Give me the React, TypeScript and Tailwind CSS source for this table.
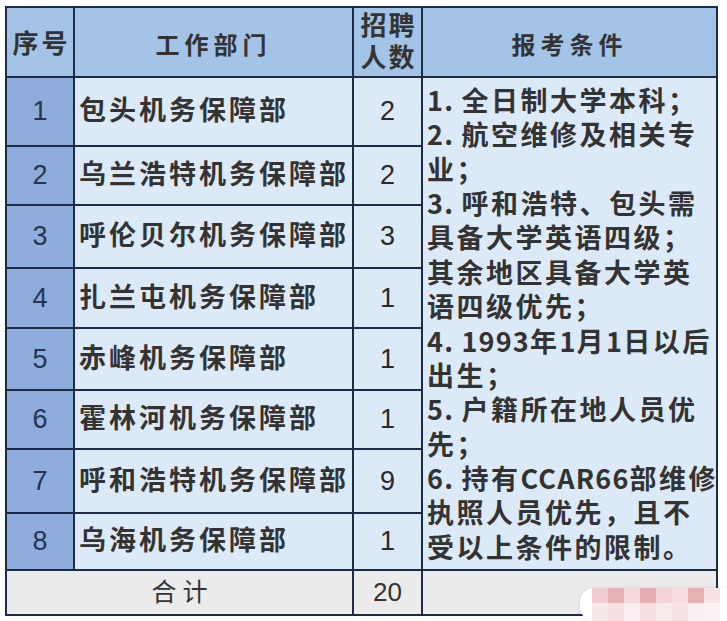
import React from 'react'

const ROWS: [string, string, string][] = [
  ['1', '包头机务保障部', '2'],
  ['2', '乌兰浩特机务保障部', '2'],
  ['3', '呼伦贝尔机务保障部', '3'],
  ['4', '扎兰屯机务保障部', '1'],
  ['5', '赤峰机务保障部', '1'],
  ['6', '霍林河机务保障部', '1'],
  ['7', '呼和浩特机务保障部', '9'],
  ['8', '乌海机务保障部', '1'],
]

// conditions column, wrapped as in the source sheet
const CONDITIONS = [
  '1. 全日制大学本科；',
  '2. 航空维修及相关专',
  '业；',
  '3. 呼和浩特、包头需',
  '具备大学英语四级；',
  '其余地区具备大学英',
  '语四级优先；',
  '4. 1993年1月1日以后',
  '出生；',
  '5. 户籍所在地人员优',
  '先；',
  '6. 持有CCAR66部维修',
  '执照人员优先，且不',
  '受以上条件的限制。',
]

const WM_TOP = ['#f1cdd0', '#e8b1b5', '#f4d9db', '#e7adb2', '#f3d4d7', '#f5dcde', '#e8afb4', '#f6e2e4']
const WM_BOTTOM = ['#f8e8e9', '#f6e0e2', '#faeef0', '#f5dde0', '#f9ebec', '#f7e3e5', '#faeff0', '#fbf2f3']

// latin runs sit tighter than the CJK characters
function ConditionLine({ text }: { text: string }) {
  const parts = text.split(/([\x20-\x7e]+)/).filter(Boolean)
  return (
    <div className="h-[34.4px]">
      {parts.map((p, i) =>
        /^[\x20-\x7e]+$/.test(p) ? (
          <span key={i} className="tracking-[1.2px]">
            {p}
          </span>
        ) : (
          <span key={i}>{p}</span>
        )
      )}
    </div>
  )
}

export default function App() {
  return (
    <div className="relative w-[727px] h-[621px] bg-white overflow-hidden font-['Liberation_Sans','Noto_Sans_CJK_SC',sans-serif] text-[#333]">
      <div className="ml-[5px] mt-[6px] w-[713px] grid grid-cols-[66px_277px_67px_293px] grid-rows-[68px_67px_57px_61px_58px_60px_57px_62px_55px_43px] gap-[2px] p-[2px] bg-[#1e2b45]">
        {/* header */}
        <div className="bg-[#a3c3e7] flex items-center justify-center text-[26px] font-bold tracking-[3px] pl-[3px] pt-1">
          序号
        </div>
        <div className="bg-[#a3c3e7] flex items-center justify-center text-[24px] font-bold tracking-[5px] pt-2">
          工作部门
        </div>
        <div className="bg-[#a3c3e7] flex flex-col items-center justify-center text-[26px] font-bold leading-[32px] tracking-[2px] pl-[2px]">
          <span>招聘</span>
          <span>人数</span>
        </div>
        <div className="bg-[#a3c3e7] flex items-center justify-center text-[24px] font-bold tracking-[5px] pt-2">
          报考条件
        </div>

        {/* conditions spanning all department rows */}
        <div className="col-start-4 row-start-2 row-span-8 bg-[#dce9f6] flex flex-col justify-center pl-[4px] font-['Noto_Sans_CJK_SC',sans-serif] text-[27px] font-bold leading-[34.4px] tracking-[2.5px] whitespace-nowrap">
          {CONDITIONS.map((line) => (
            <ConditionLine key={line} text={line} />
          ))}
        </div>

        {ROWS.map(([no, dept, count]) => (
          <React.Fragment key={no}>
            <div className="bg-[#8eacdc] flex items-center justify-center text-[27px] text-[#27344f]">
              {no}
            </div>
            <div className="bg-[#dce9f6] flex items-center pl-[4px] text-[27px] font-bold tracking-[3px] whitespace-nowrap">
              {dept}
            </div>
            <div className="bg-[#dce9f6] flex items-center justify-center text-[27px] text-[#2a2a2a]">
              {count}
            </div>
          </React.Fragment>
        ))}

        {/* total */}
        <div className="col-span-2 bg-[#ebebeb] flex items-center justify-center text-[25px] tracking-[6px] pl-[6px]">
          合计
        </div>
        <div className="bg-[#ebebeb] flex items-center justify-center text-[26px] font-['Liberation_Sans_Narrow','Liberation_Sans',sans-serif]">
          20
        </div>
        <div className="bg-[#ebebeb]" />
      </div>

      {/* pixelated watermark over the bottom right corner */}
      <div className="absolute left-[580px] top-[588px] w-[147px] h-[33px] bg-white rounded-l-[14px] shadow-[0_0_3px_rgba(0,0,0,0.15)] pl-[12px] flex flex-col">
        <div className="flex h-[15px]">
          {WM_TOP.map((c, i) => (
            <div key={i} className="w-[16px] h-full" style={{ backgroundColor: c }} />
          ))}
        </div>
        <div className="flex h-[18px]">
          {WM_BOTTOM.map((c, i) => (
            <div key={i} className="w-[16px] h-full" style={{ backgroundColor: c }} />
          ))}
        </div>
      </div>
    </div>
  )
}
